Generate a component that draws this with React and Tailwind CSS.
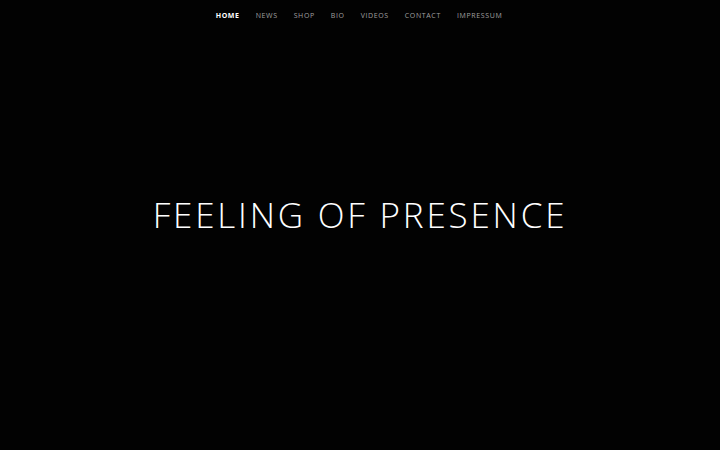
import React from "react";

const links = ["Home", "News", "Shop", "Bio", "Videos", "Contact", "Impressum"];

export default function App() {
  return (
    <div
      className="w-full h-[450px] bg-[#020202] flex flex-col"
      style={{ fontFamily: '"Open Sans", sans-serif' }}
    >
      <nav className="h-[30px] flex items-center justify-center gap-[16px] pt-[2px] pr-[2px]">
        {links.map((l, i) => (
          <a
            key={l}
            href="#"
            className={`uppercase text-[7px] tracking-[0.09em] ${
              i === 0 ? "font-bold text-white" : "text-[#a0a0a0]"
            }`}
          >
            {l}
          </a>
        ))}
      </nav>
      <div className="flex-1 flex items-center justify-center pb-[52px]">
        <h1 className="text-white font-light text-[35px] tracking-[0.08em] uppercase leading-none">
          Feeling of Presence
        </h1>
      </div>
    </div>
  );
}
